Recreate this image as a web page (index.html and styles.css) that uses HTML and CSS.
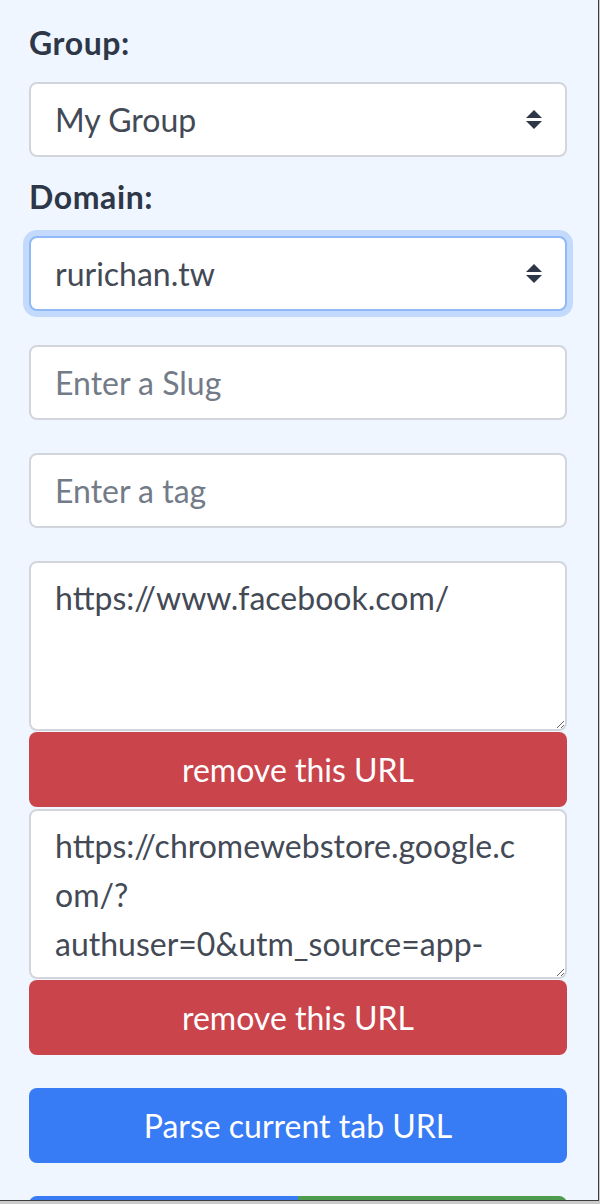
FILE: index.html
```html
<!DOCTYPE html>
<html lang="en">
<head>
<meta charset="utf-8">
<title>Short URL</title>
<link rel="stylesheet" href="styles.css">
</head>
<body>
<div class="window">
  <form class="panel">
    <label class="label" for="group">Group:</label>
    <div class="select-wrap">
      <select id="group" class="field select">
        <option>My Group</option>
      </select>
      <svg class="caret" width="16" height="19" viewBox="0 0 16 19" aria-hidden="true">
        <path d="M8 0 L16 8 L0 8 Z M0 11 L16 11 L8 19 Z" fill="#2d3748"/>
      </svg>
    </div>

    <label class="label" for="domain">Domain:</label>
    <div class="select-wrap">
      <select id="domain" class="field select focused">
        <option>rurichan.tw</option>
      </select>
      <svg class="caret" width="16" height="19" viewBox="0 0 16 19" aria-hidden="true">
        <path d="M8 0 L16 8 L0 8 Z M0 11 L16 11 L8 19 Z" fill="#2d3748"/>
      </svg>
    </div>

    <input class="field input gap-top" type="text" placeholder="Enter a Slug">
    <input class="field input gap-top-sm" type="text" placeholder="Enter a tag">

    <textarea class="field area gap-top-sm">https://www.facebook.com/</textarea>
    <button type="button" class="btn btn-red after-area">remove this URL</button>
    <textarea class="field area after-btn">https://chromewebstore.google.com/?authuser=0&amp;utm_source=app-launcher&amp;hl=zh-TW</textarea>
    <button type="button" class="btn btn-red after-area">remove this URL</button>

    <button type="button" class="btn btn-blue gap-top-sm">Parse current tab URL</button>

    <div class="btn-row">
      <button type="button" class="btn btn-blue half left" aria-label="Copy"></button>
      <button type="button" class="btn btn-green half right" aria-label="Shorten"></button>
    </div>
  </form>
</div>
</body>
</html>
```

FILE: styles.css
```css
* { box-sizing: border-box; }

html, body {
  margin: 0;
  padding: 0;
}

body {
  background: #cbcbcb;
  font-family: Lato, "Open Sans", sans-serif;
}

.window {
  width: 599px;
  height: 1201px;
  background: #f0f6ff;
  border-right: 1px solid #3d3d3d;
  border-bottom: 1px solid #3d3d3d;
  overflow: hidden;
}

.panel {
  display: flex;
  flex-direction: column;
  padding: 23px 31px 0 29px;
}

.label {
  display: block;
  font-size: 32px;
  line-height: 40px;
  font-weight: 700;
  letter-spacing: 0.6px;
  color: #2d3748;
  margin-bottom: 19px;
}

.select-wrap {
  position: relative;
  margin-bottom: 20px;
}

.field {
  display: block;
  width: 100%;
  margin: 0;
  font-family: inherit;
  font-size: 32px;
  color: #434a56;
  background: #ffffff;
  border: 2px solid #d2d6dc;
  border-radius: 8px;
  outline: none;
}

.select {
  -webkit-appearance: none;
  appearance: none;
  height: 75px;
  padding: 0 60px 0 24px;
}

.select.focused {
  border-color: #8fbaf7;
  box-shadow: 0 0 0 6px #c3dafc;
}

.caret {
  position: absolute;
  right: 25px;
  top: 28px;
  pointer-events: none;
}

.input {
  height: 75px;
  padding: 0 24px;
}

.input::placeholder {
  color: #727b87;
  opacity: 1;
}

.area {
  height: 170px;
  padding: 10px 40px 10px 24px;
  line-height: 49px;
  overflow: hidden;
  resize: vertical;
}

.btn {
  display: block;
  width: 100%;
  height: 75px;
  margin: 0;
  padding: 0;
  border: none;
  border-radius: 8px;
  font-family: inherit;
  font-size: 32px;
  color: #ffffff;
  cursor: pointer;
}

.btn-red { background: #ca444b; }
.btn-blue { background: #377bf5; }
.btn-green { background: #4f9b4f; }

.gap-top { margin-top: 14px; }
.gap-top-sm { margin-top: 33px; }
.after-area { margin-top: 1px; }
.after-btn { margin-top: 2px; }

.btn-row {
  display: flex;
  margin-top: 33px;
}

.half {
  flex: 1 1 0;
  margin-top: 0;
}

.half.left { border-radius: 8px 0 0 8px; }
.half.right { border-radius: 0 8px 8px 0; }
```
